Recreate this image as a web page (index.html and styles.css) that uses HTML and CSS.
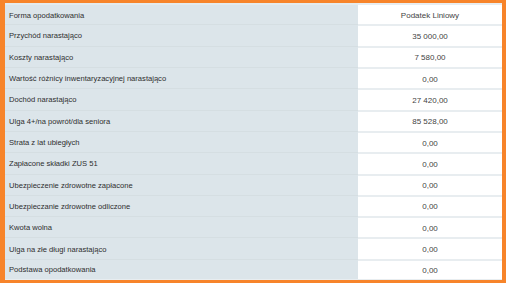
FILE: index.html
```html
<!DOCTYPE html>
<html lang="pl">
<head>
<meta charset="utf-8">
<link rel="stylesheet" href="styles.css">
</head>
<body>
<div class="frame">
  <div class="tbl">
    <div class="row"><div class="lbl">Forma opodatkowania</div><div class="val">Podatek Liniowy</div></div>
    <div class="row"><div class="lbl">Przychód narastająco</div><div class="val">35 000,00</div></div>
    <div class="row"><div class="lbl">Koszty narastająco</div><div class="val">7 580,00</div></div>
    <div class="row"><div class="lbl">Wartość różnicy inwentaryzacyjnej narastająco</div><div class="val">0,00</div></div>
    <div class="row"><div class="lbl">Dochód narastająco</div><div class="val">27 420,00</div></div>
    <div class="row"><div class="lbl">Ulga 4+/na powrót/dla seniora</div><div class="val">85 528,00</div></div>
    <div class="row"><div class="lbl">Strata z lat ubiegłych</div><div class="val">0,00</div></div>
    <div class="row"><div class="lbl">Zapłacone składki ZUS 51</div><div class="val">0,00</div></div>
    <div class="row"><div class="lbl">Ubezpieczenie zdrowotne zapłacone</div><div class="val">0,00</div></div>
    <div class="row"><div class="lbl">Ubezpieczanie zdrowotne odliczone</div><div class="val">0,00</div></div>
    <div class="row"><div class="lbl">Kwota wolna</div><div class="val">0,00</div></div>
    <div class="row"><div class="lbl">Ulga na złe długi narastająco</div><div class="val">0,00</div></div>
    <div class="row"><div class="lbl">Podstawa opodatkowania</div><div class="val">0,00</div></div>
  </div>
</div>
</body>
</html>
```

FILE: styles.css
```css
html, body {
  margin: 0;
  padding: 0;
}
body {
  width: 506px;
  height: 283px;
  background: #f7842a;
  font-family: "Liberation Sans", Arial, sans-serif;
  font-size: 8px;
  color: #333;
}
.frame {
  box-sizing: border-box;
  width: 506px;
  height: 283px;
  padding: 3px 4px 3px 5px;
}
.tbl {
  height: 100%;
  display: flex;
  flex-direction: column;
  background: #ffffff;
}
.row {
  flex: 1;
  display: grid;
  grid-template-columns: 353px 1fr;
}
.lbl {
  background: #dce5ea;
  border-top: 1px solid #d5dee2;
  display: flex;
  align-items: center;
  padding: 1px 0 0 4px;
  font-size: 7.6px;
  color: #2e2e2e;
}
.val {
  border-top: 2px solid #e8edf0;
  display: flex;
  align-items: center;
  justify-content: center;
  padding-top: 1px;
  color: #444;
}
.row:first-child .lbl {
  border-top: 2px solid #e4ebee;
}
.row:last-child .val,
.row:last-child .lbl {
  border-bottom: 1px solid #e8edf0;
}
```
